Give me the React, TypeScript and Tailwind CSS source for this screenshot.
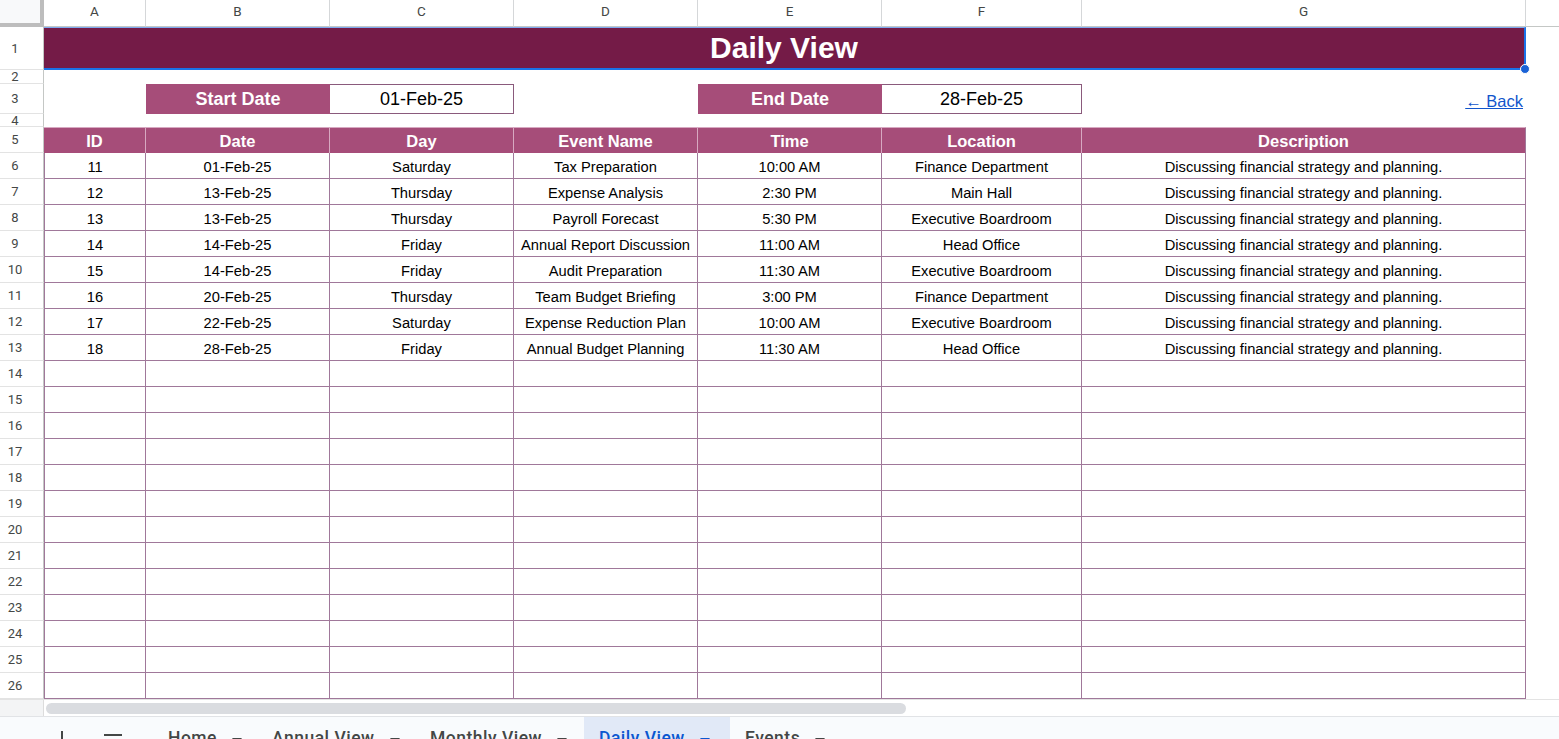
import React from "react";

const colW = ["w-[102px]", "w-[184px]", "w-[184px]", "w-[184px]", "w-[184px]", "w-[200px]", "w-[444px]"];
const letters = ["A", "B", "C", "D", "E", "F", "G"];

const data: string[][] = [
  ["11", "01-Feb-25", "Saturday", "Tax Preparation", "10:00 AM", "Finance Department"],
  ["12", "13-Feb-25", "Thursday", "Expense Analysis", "2:30 PM", "Main Hall"],
  ["13", "13-Feb-25", "Thursday", "Payroll Forecast", "5:30 PM", "Executive Boardroom"],
  ["14", "14-Feb-25", "Friday", "Annual Report Discussion", "11:00 AM", "Head Office"],
  ["15", "14-Feb-25", "Friday", "Audit Preparation", "11:30 AM", "Executive Boardroom"],
  ["16", "20-Feb-25", "Thursday", "Team Budget Briefing", "3:00 PM", "Finance Department"],
  ["17", "22-Feb-25", "Saturday", "Expense Reduction Plan", "10:00 AM", "Executive Boardroom"],
  ["18", "28-Feb-25", "Friday", "Annual Budget Planning", "11:30 AM", "Head Office"],
];

const headers = ["ID", "Date", "Day", "Event Name", "Time", "Location", "Description"];

const arial = { fontFamily: '"Liberation Sans", Arial, sans-serif' };
const roboto = { fontFamily: 'Roboto, "Noto Sans", sans-serif' };

function RowHead({ n, h }: { n: number; h: string }) {
  return (
    <div
      className={`${h} w-[44px] shrink-0 flex items-center border-r border-b border-r-[#c4c7c5] border-b-[#e3e3e3] bg-white overflow-hidden`}
      style={roboto}
    >
      <span className="w-[30px] text-center text-[13px] text-[#444746] leading-none">{n}</span>
    </div>
  );
}

function Caret() {
  return (
    <svg width="10" height="6" viewBox="0 0 10 6" className="shrink-0">
      <path d="M0 0 H10 L5 6 Z" fill="currentColor" />
    </svg>
  );
}

export default function App() {
  const desc = "Discussing financial strategy and planning.";
  const emptyRows = Array.from({ length: 13 }, (_, i) => 14 + i);
  return (
    <div className="w-[1559px] h-[739px] overflow-hidden bg-white flex flex-col">
      {/* column headers */}
      <div className="flex h-[27px] shrink-0" style={roboto}>
        <div className="w-[44px] shrink-0 bg-[#f8f9fa] border-r-[4px] border-b-[4px] border-[#bdbdbd]" />
        {letters.map((l, i) => (
          <div
            key={l}
            className={`${colW[i]} shrink-0 flex items-center justify-center pb-[3px] border-r border-r-[#d5d7d9] border-b border-b-[#c4c7c5] text-[13.5px] text-[#444746]`}
          >
            {l}
          </div>
        ))}
        <div className="flex-1 border-b border-b-[#c4c7c5]" />
      </div>

      {/* row 1 */}
      <div className="flex h-[43px] shrink-0">
        <RowHead n={1} h="h-[43px]" />
        <div className="relative w-[1482px] shrink-0 bg-[#741b47] border-t border-t-[#7faaf0] border-r-2 border-r-[#1a73e8] border-b-2 border-b-[#1a73e8] flex items-center justify-center">
          <span className="text-[30px] font-bold text-white leading-none" style={arial}>
            Daily View
          </span>
          <div className="absolute right-[-6px] bottom-[-6px] w-[10px] h-[10px] rounded-full bg-[#1a62d6] border border-white" />
        </div>
      </div>

      {/* row 2 */}
      <div className="flex h-[14px] shrink-0">
        <RowHead n={2} h="h-[14px]" />
      </div>

      {/* row 3 */}
      <div className="flex h-[30px] shrink-0" style={arial}>
        <RowHead n={3} h="h-[30px]" />
        <div className={`${colW[0]} shrink-0`} />
        <div className={`${colW[1]} shrink-0 bg-[#a64d79] flex items-center justify-center text-white font-bold text-[18px]`}>
          Start Date
        </div>
        <div className={`${colW[2]} shrink-0 border border-l-0 border-[#8a5a7c] flex items-center justify-center text-[18px] text-black`}>
          01-Feb-25
        </div>
        <div className={`${colW[3]} shrink-0`} />
        <div className={`${colW[4]} shrink-0 bg-[#a64d79] flex items-center justify-center text-white font-bold text-[18px]`}>
          End Date
        </div>
        <div className={`${colW[5]} shrink-0 border border-l-0 border-[#8a5a7c] flex items-center justify-center text-[18px] text-black`}>
          28-Feb-25
        </div>
        <div className={`${colW[6]} shrink-0 flex items-end justify-end pr-[3px] pb-[5px]`}>
          <span className="text-[16.5px] text-[#1155cc] underline leading-none">← Back</span>
        </div>
      </div>

      {/* row 4 */}
      <div className="flex h-[13px] shrink-0">
        <RowHead n={4} h="h-[13px]" />
      </div>

      {/* row 5 header */}
      <div className="flex h-[26px] shrink-0" style={arial}>
        <RowHead n={5} h="h-[26px]" />
        {headers.map((hd, i) => (
          <div
            key={hd}
            className={`${colW[i]} shrink-0 bg-[#a64d79] border-t border-t-[#d7a9c1] ${i < 6 ? "border-r border-r-[#d7a9c1]" : "border-r border-r-[#a0789a]"} flex items-end justify-center pb-[2px] text-white font-bold text-[16.5px] leading-[19px]`}
          >
            {hd}
          </div>
        ))}
      </div>

      {/* data rows */}
      {data.map((r, ri) => (
        <div key={ri} className="flex h-[26px] shrink-0" style={arial}>
          <RowHead n={6 + ri} h="h-[26px]" />
          {[...r, desc].map((v, i) => (
            <div
              key={i}
              className={`${colW[i]} shrink-0 border-r border-b border-[#a0789a] ${i === 0 ? "border-l" : ""} flex items-end justify-center pb-[2px] text-[14.7px] leading-[17px] text-black whitespace-nowrap`}
            >
              {v}
            </div>
          ))}
        </div>
      ))}

      {emptyRows.map((n) => (
        <div key={n} className="flex h-[26px] shrink-0">
          <RowHead n={n} h="h-[26px]" />
          {colW.map((w, i) => (
            <div key={i} className={`${w} shrink-0 border-r border-b border-[#a0789a] ${i === 0 ? "border-l" : ""}`} />
          ))}
        </div>
      ))}

      {/* horizontal scroll */}
      <div className="flex h-[17px] shrink-0 border-t border-t-[#e3e3e3]">
        <div className="w-[44px] shrink-0 bg-[#f3f4f5] border-r border-r-[#dcdcdc]" />
        <div className="flex-1 flex items-center pl-[2px]">
          <div className="w-[860px] h-[11px] rounded-full bg-[#dadce0]" />
        </div>
      </div>

      {/* sheet tabs */}
      <div className="flex-1 bg-[#f9fbfd] border-t border-t-[#e1e3e6] flex items-stretch text-[#444746] overflow-hidden" style={roboto}>
        <div className="w-[124px] shrink-0 relative">
          <svg width="16" height="16" viewBox="0 0 16 16" className="absolute left-[54px] top-[14px]">
            <path d="M8 0 V16 M0 9 H16" stroke="#444746" strokeWidth="2" />
          </svg>
          <svg width="20" height="16" viewBox="0 0 20 16" className="absolute left-[103px] top-[17px]">
            <path d="M1 1 H19 M1 7 H19 M1 13 H19" stroke="#444746" strokeWidth="2" />
          </svg>
        </div>
        <div className="w-[28px] shrink-0" />
        {[
          { t: "Home", w: "w-[104px]" },
          { t: "Annual View", w: "w-[158px]" },
          { t: "Monthly View", w: "w-[170px]" },
        ].map((tab) => (
          <div key={tab.t} className={`${tab.w} shrink-0 flex items-start gap-[15px] pl-[16px] pt-[13px] text-[17.5px] font-medium leading-none tracking-[0.5px]`}>
            <span className="whitespace-nowrap">{tab.t}</span>
            <span className="pt-[8px]"><Caret /></span>
          </div>
        ))}
        <div className="w-[146px] shrink-0 bg-[#e1e9f7] flex items-start gap-[15px] pl-[15px] pt-[13px] text-[17.5px] font-medium leading-none tracking-[0.5px] text-[#0b57d0]">
          <span className="whitespace-nowrap">Daily View</span>
          <span className="pt-[8px]"><Caret /></span>
        </div>
        <div className="w-[120px] shrink-0 flex items-start gap-[15px] pl-[15px] pt-[13px] text-[17.5px] font-medium leading-none tracking-[0.5px]">
          <span className="whitespace-nowrap">Events</span>
          <span className="pt-[8px]"><Caret /></span>
        </div>
      </div>
    </div>
  );
}
